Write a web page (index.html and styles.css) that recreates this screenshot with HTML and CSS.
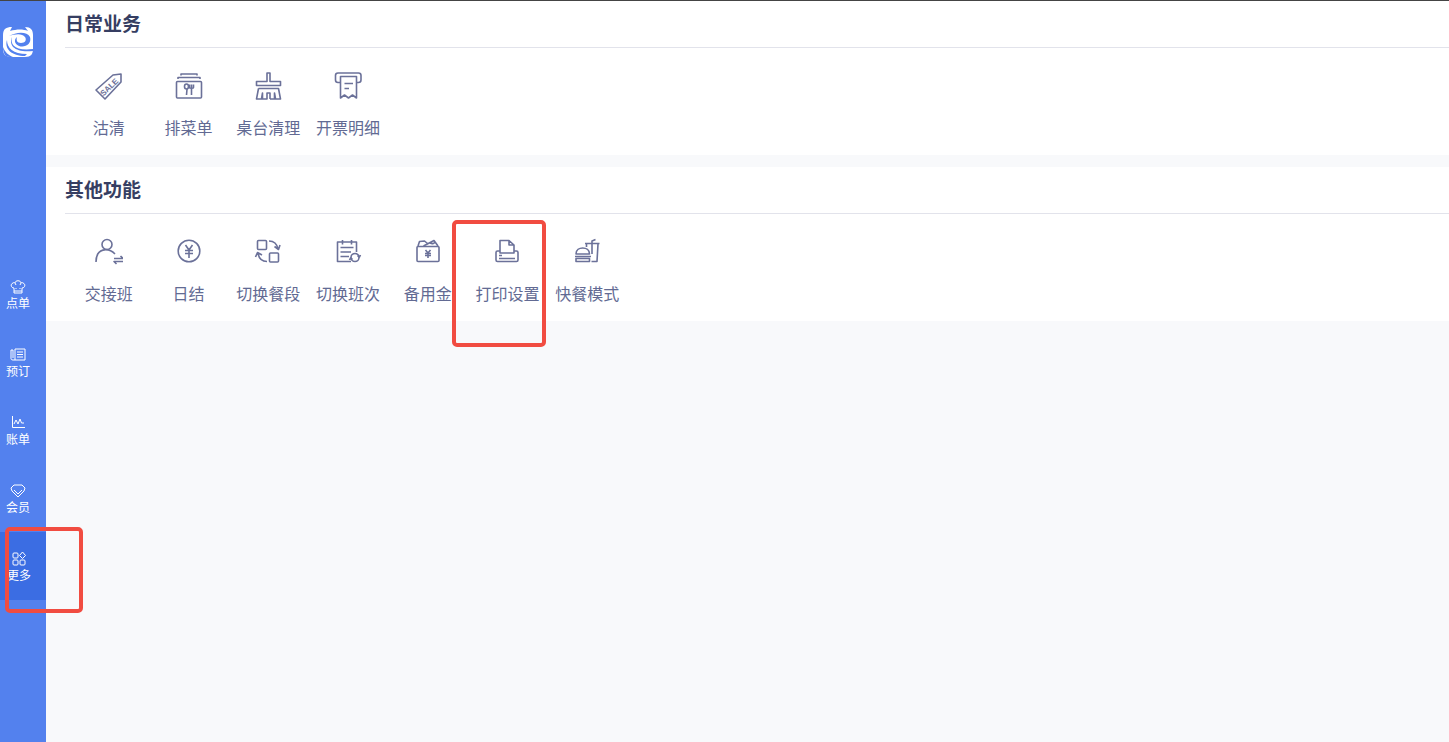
FILE: index.html
```html
<!DOCTYPE html>
<html lang="zh-CN">
<head>
  <meta charset="UTF-8" />
  <meta name="viewport" content="width=device-width, initial-scale=1.0"/>
  <title>更多</title>
  <link rel="stylesheet" href="styles.css">
</head>
<body>
  <aside class="sidebar">
    <svg class="logo" viewBox="0 0 32 32" aria-hidden="true">
      <path class="logo-base" d="M10 1C4 1 1 3 1 9v14c0 6 3 8 9 8h13c6 0 8-3 8-8V9c0-5-2-8-8-8l3 4C21 3 15 3 8 5z"/>
      <path class="logo-cut" d="M7 10C14 6 25 5 28 11c2 7-5 11-11 9-5-2-5-7-2-9-1 3 0 6 4 6 4 0 6-3 4-6-3-4-10-3-16-1z"/>
      <path class="logo-cut" d="M10 11c-2 8 3 14 21 12v2C14 27 6 20 10 11z"/>
      <path class="logo-cut" d="M5 14c0 8 6 14 20 14l-2 2C10 30 2 23 5 14z"/>
      <path class="logo-cut" d="M1 21c2 5 5 8 10 10H8c-5 0-7-4-7-10z"/>
    </svg>
    <nav class="nav">
      <a class="nav-item" href="#order">
        <svg viewBox="0 0 16 16" aria-hidden="true"><path d="M4 12V9C1 9 0 5 3 4c1-1 2 0 2 0 0-3 6-3 6 0 0 0 1-1 2 0 3 1 2 5-1 5v3zM4 12v2h8v-2M6 9v1M10 9v1M5 4l1 2M11 4l-1 2"/></svg>
        <span>点单</span>
      </a>
      <a class="nav-item" href="#booking">
        <svg viewBox="0 0 16 16" aria-hidden="true"><path d="M5 2h10v11H3c-2 0-2-1-2-2V3h2v8M5 2v11M7 5h6M7 7.500h6M7 10h6"/></svg>
        <span>预订</span>
      </a>
      <a class="nav-item" href="#bills">
        <svg viewBox="0 0 16 16" aria-hidden="true"><path d="M2.500 1v11.500H15M4 9l2-4 2 4 2-5 1.500 4H14"/></svg>
        <span>账单</span>
      </a>
      <a class="nav-item" href="#members">
        <svg viewBox="0 0 16 16" aria-hidden="true"><path d="M4 2h8l3 3-1 3-6 6-6-6-1-3zM4 7l4 4 4-4"/></svg>
        <span>会员</span>
      </a>
      <a class="nav-item active" href="#more" aria-current="page">
        <svg viewBox="0 0 16 16" aria-hidden="true"><rect x="2" y="2" width="5" height="5" rx="1"/><path d="M11.500 1l3 3.500-3 3-3-3z"/><rect x="2" y="9" width="5" height="5" rx="1"/><rect x="9" y="9" width="5" height="5" rx="1"/></svg>
        <span>更多</span>
        <i class="mark mark-nav"></i>
      </a>
    </nav>
  </aside>

  <main class="content">
    <section class="panel">
      <h2>日常业务</h2>
      <div class="grid">
        <button type="button" class="tile">
          <svg viewBox="0 0 28 28" aria-hidden="true"><path d="M1 18L18 3l8-1v8L10 27z"/><text class="tag-text" x="14" y="18" transform="rotate(-44 14 15)">SALE</text></svg>
          <span>沽清</span>
        </button>
        <button type="button" class="tile">
          <svg viewBox="0 0 28 28" aria-hidden="true"><rect x="1.500" y="9.500" width="25" height="16.500" rx="1"/><path d="M3 7V5.500h22V7M6 3.500V2h16v1.500M12 17l-.5 6M16.500 16.500v6.500M14.500 12.500v3c0 1 4 1 4 0v-3M16.500 12.500v4"/><ellipse cx="11.500" cy="14.500" rx="2" ry="2.500"/></svg>
          <span>排菜单</span>
        </button>
        <button type="button" class="tile">
          <svg viewBox="0 0 28 28" aria-hidden="true"><path d="M13 9.500V1h3v8.500h10.500v4h-24v-4zM4.500 16.500h20l2 10.500h-5l-1-6v6H16M4.500 16.500L2.500 27h5l1-6v6H13v-6h3v6"/></svg>
          <span>桌台清理</span>
        </button>
        <button type="button" class="tile">
          <svg viewBox="0 0 28 28" aria-hidden="true"><path d="M6.500 10.500H4c-1.500 0-2.500-1-2.500-2.500V3.500C1.500 2 2.500 1 4 1h20.500C26 1 27 2 27 3.500V8c0 1.500-1 2.500-2.500 2.500h-2M6.500 26V4.500h16V26L18.500 23l-4 3-4-3zM10.500 11.500H19M10.500 16.500H15"/></svg>
          <span>开票明细</span>
        </button>
      </div>
    </section>

    <section class="panel">
      <h2>其他功能</h2>
      <div class="grid">
        <button type="button" class="tile">
          <svg viewBox="0 0 28 28" aria-hidden="true"><circle cx="12" cy="6.500" r="5"/><path d="M1 24C1 10 13 9 20 16M19 20.500h9L25.500 18M28 23.500h-9l2.500 2.500"/></svg>
          <span>交接班</span>
        </button>
        <button type="button" class="tile">
          <svg viewBox="0 0 28 28" aria-hidden="true"><circle cx="14" cy="13" r="10.800"/><path d="M10.500 7l3.500 5 3.500-5M14 12v8M10 12.500h8M10 15.500h8"/></svg>
          <span>日结</span>
        </button>
        <button type="button" class="tile">
          <svg viewBox="0 0 28 28" aria-hidden="true"><rect x="3.500" y="2.500" width="9" height="9" rx="1"/><rect x="15.500" y="15" width="9" height="9" rx="1"/><path d="M15 3c5 0 8 3 9 8M20.500 8.500l4 3 1.500-4.500M13 23.500c-5 0-8-3-9-8M1.500 19l2-4.500L8 17"/></svg>
          <span>切换餐段</span>
        </button>
        <button type="button" class="tile">
          <svg viewBox="0 0 28 28" aria-hidden="true"><path d="M22.500 14V4h-19v19.500H17M8.500 2v4.500M17.500 2v4.500M6.500 9.500h13M6.500 14H17M6.500 18.500H15"/><circle cx="21" cy="19.500" r="4"/><path d="M23.500 17.500l2 1.500 1-2M18.500 21.500l-2-1.500-1 2"/></svg>
          <span>切换班次</span>
        </button>
        <button type="button" class="tile">
          <svg viewBox="0 0 28 28" aria-hidden="true"><rect x="3" y="8.500" width="22" height="15" rx="1"/><path d="M4 8l1.500-4.500 5-.5 3 2.500M9.500 8L20 2.500l4 5.500M16 5c2 1 4 1 5-1M11.500 12l2.500 3 2.500-3M14 15v5M11 15.500h6M11 17.500h6"/></svg>
          <span>备用金</span>
        </button>
        <button type="button" class="tile">
          <svg viewBox="0 0 28 28" aria-hidden="true"><path d="M7 13H4.500C4 13 3 13.500 3 14.500V22c0 1 .5 1.500 1.500 1.500h19c1 0 1.500-.5 1.500-1.500v-7.500c0-1-.5-1.500-1.500-1.500H21M7 15V2.500h9l5 4.500v8zM16 2.500V7h5M6 17.500h3M6 20.500h16"/></svg>
          <span>打印设置</span>
          <i class="mark mark-tile"></i>
        </button>
        <button type="button" class="tile">
          <svg viewBox="0 0 28 28" aria-hidden="true"><path d="M3 16c0-8 13.500-8 13.500 0zM2 18.500h16M3 20.500h13.500v3H3zM12 5.500h14.500M13.500 6v3M25 6l-1 17.500h-5.500M19 16V3l3.500-1.500"/></svg>
          <span>快餐模式</span>
        </button>
      </div>
    </section>
  </main>
</body>
</html>
```
FILE: styles.css
```css
* {
  box-sizing: border-box;
}

body {
  margin: 0;
  min-height: 100vh;
  display: flex;
  border-top: 1px solid #444;
  background: #f8f9fb;
  font-family: "Noto Sans CJK SC", sans-serif;
}

.sidebar {
  width: 46px;
  flex: none;
  background: #5381ee;
}

.logo {
  display: block;
  width: 32px;
  height: 32px;
  margin: 25px 0 0 2px;
}

.logo-base {
  fill: #fff;
}

.logo-cut {
  fill: #5381ee;
}

.nav {
  margin-top: 202px;
}

.nav-item {
  position: relative;
  display: flex;
  flex-direction: column;
  align-items: center;
  height: 68px;
  padding: 19px 10px 0 0;
  color: #fff;
  font-size: 12px;
  line-height: 16px;
  text-decoration: none;
}

.nav-item.active {
  padding-right: 8px;
  background: #3b6de3;
}

.nav-item svg {
  width: 16px;
  height: 16px;
  fill: none;
  stroke: #fff;
}

.content {
  flex: 1;
  min-width: 0;
}

.panel {
  padding: 0 0 16px 19px;
  margin-bottom: 12px;
  background: #fff;
}

.panel h2 {
  margin: 0;
  height: 47px;
  border-bottom: 1px solid #e2e3eb;
  color: #363e62;
  font-size: 19px;
  line-height: 44px;
}

.grid {
  display: grid;
  grid-template-columns: repeat(7, 1fr);
  width: 558px;
  padding-top: 24px;
  margin-left: 4px;
}

.tile {
  position: relative;
  display: flex;
  flex-direction: column;
  align-items: center;
  gap: 15px;
  padding: 0;
  border: 0;
  background: none;
  color: #626a93;
  font-family: inherit;
  font-size: 16px;
  line-height: 24px;
  white-space: nowrap;
  cursor: pointer;
}

.tile svg {
  width: 28px;
  height: 28px;
  fill: none;
  stroke: #6b7199;
  stroke-width: 1.6;
  stroke-linejoin: round;
}

.tile .tag-text {
  fill: #6b7199;
  stroke: none;
  font-family: "Liberation Sans", sans-serif;
  font-size: 8px;
  font-weight: bold;
  text-anchor: middle;
}

/* red highlight frames */
.mark {
  position: absolute;
  z-index: 1;
  border: 4px solid #f14c41;
  border-radius: 5px;
  pointer-events: none;
}

.mark-nav {
  top: -5px;
  left: 5px;
  width: 78px;
  height: 86px;
}

.mark-tile {
  top: -18px;
  left: -16px;
  width: 94px;
  height: 127px;
}
```
